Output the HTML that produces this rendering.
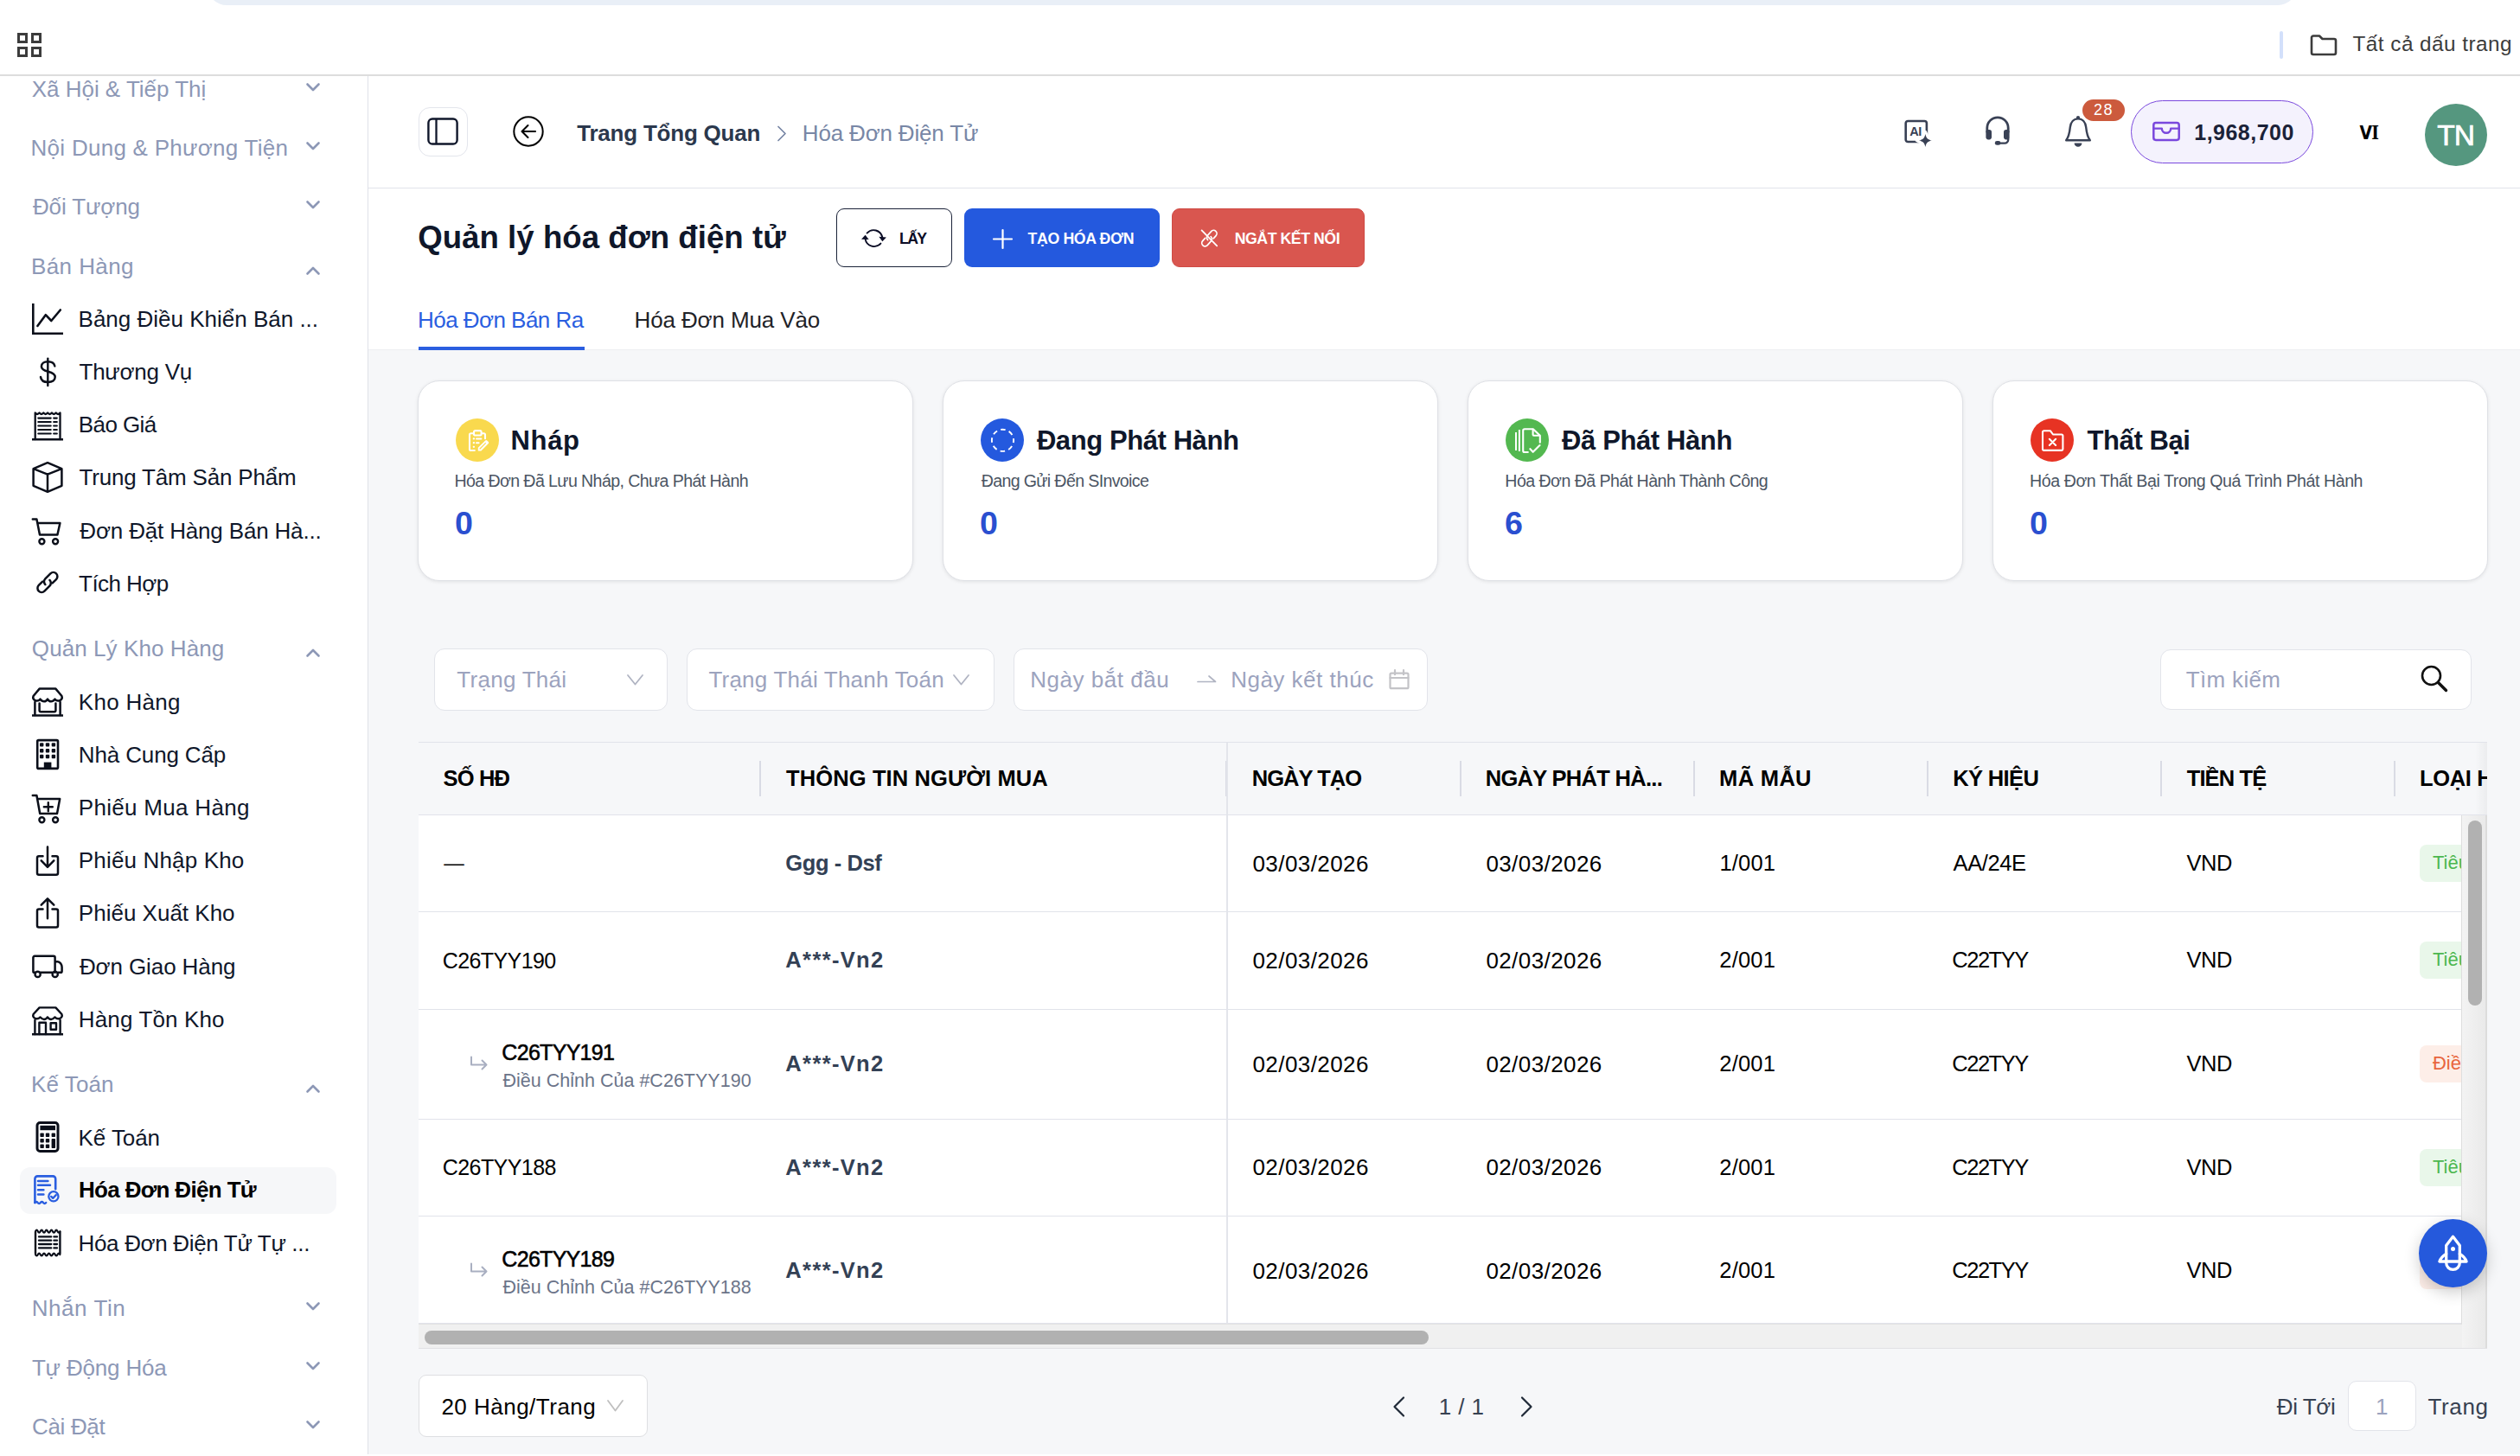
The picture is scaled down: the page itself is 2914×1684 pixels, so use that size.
<!DOCTYPE html>
<html lang="vi"><head><meta charset="utf-8"><title>Quản lý hóa đơn điện tử</title>
<style>
html,body{margin:0;padding:0;background:#fff;}
body{width:2914px;height:1684px;overflow:hidden;position:relative;font-family:"Liberation Sans",sans-serif;}
.t{position:absolute;white-space:nowrap;line-height:1;}
.b{position:absolute;}
svg{overflow:visible;}
</style></head><body>
<div class="b" style="left:0px;top:0px;width:2914px;height:86px;background:#fff"></div>
<div class="b" style="left:240px;top:-40px;width:2416px;height:45.6px;background:#e9eff7;border-radius:22px"></div>
<div class="b" style="left:0px;top:86px;width:2914px;height:2px;background:#dddddd"></div>
<svg class="b" style="left:20px;top:38px;" width="28" height="28" viewBox="0 0 28 28" fill="none"><path d="M1.5 1.5h9v9h-9zM17.5 1.5h9v9h-9zM1.5 17.5h9v9h-9zM17.5 17.5h9v9h-9z" stroke="#3c3c3c" stroke-width="3"/></svg>
<div class="b" style="left:2636px;top:36.4px;width:4px;height:31.2px;background:#d3e0fb;border-radius:2px"></div>
<svg class="b" style="left:2671px;top:39px;" width="32" height="26" viewBox="0 0 32 26" fill="none"><path d="M2 4.5a2 2 0 0 1 2-2h7l3.5 3.5H28a2 2 0 0 1 2 2V22a2 2 0 0 1-2 2H4a2 2 0 0 1-2-2z" stroke="#3c3c3c" stroke-width="2.6" stroke-linejoin="round"/></svg>
<div class="t" style="left:2720.55px;top:39.33px;font-size:24.3px;color:#3c3c3c;font-weight:400;letter-spacing:0.47px;">Tất cả dấu trang</div>
<div class="b" style="left:0px;top:88px;width:425px;height:1596px;background:#fff"></div>
<div class="b" style="left:424.8px;top:88px;width:1.4px;height:1596px;background:#dfe1e8"></div>
<div class="t" style="left:36.72px;top:89.99px;font-size:26px;color:#8d98b6;font-weight:400;letter-spacing:-0.02px;">Xã Hội &amp; Tiếp Thị</div>
<svg class="b" style="left:354px;top:96px;" width="16" height="10" viewBox="0 0 16 10" fill="none"><path d="M1.5 1.5L8 8l6.5-6.5" stroke="#8d98b6" stroke-width="2.6" stroke-linecap="round" stroke-linejoin="round"/></svg>
<div class="t" style="left:35.57px;top:157.79px;font-size:26px;color:#8d98b6;font-weight:400;letter-spacing:0.271px;">Nội Dung &amp; Phương Tiện</div>
<svg class="b" style="left:354px;top:163.8px;" width="16" height="10" viewBox="0 0 16 10" fill="none"><path d="M1.5 1.5L8 8l6.5-6.5" stroke="#8d98b6" stroke-width="2.6" stroke-linecap="round" stroke-linejoin="round"/></svg>
<div class="t" style="left:37.92px;top:225.79px;font-size:26px;color:#8d98b6;font-weight:400;letter-spacing:-0.122px;">Đối Tượng</div>
<svg class="b" style="left:354px;top:231.8px;" width="16" height="10" viewBox="0 0 16 10" fill="none"><path d="M1.5 1.5L8 8l6.5-6.5" stroke="#8d98b6" stroke-width="2.6" stroke-linecap="round" stroke-linejoin="round"/></svg>
<div class="t" style="left:35.97px;top:294.69px;font-size:26px;color:#8d98b6;font-weight:400;letter-spacing:0.423px;">Bán Hàng</div>
<svg class="b" style="left:354px;top:307.7px;" width="16" height="10" viewBox="0 0 16 10" fill="none"><path d="M1.5 8.5L8 2l6.5 6.5" stroke="#8d98b6" stroke-width="2.6" stroke-linecap="round" stroke-linejoin="round"/></svg>
<div class="t" style="left:36.87px;top:736.79px;font-size:26px;color:#8d98b6;font-weight:400;letter-spacing:0.077px;">Quản Lý Kho Hàng</div>
<svg class="b" style="left:354px;top:749.8px;" width="16" height="10" viewBox="0 0 16 10" fill="none"><path d="M1.5 8.5L8 2l6.5 6.5" stroke="#8d98b6" stroke-width="2.6" stroke-linecap="round" stroke-linejoin="round"/></svg>
<div class="t" style="left:35.97px;top:1240.79px;font-size:26px;color:#8d98b6;font-weight:400;letter-spacing:0.097px;">Kế Toán</div>
<svg class="b" style="left:354px;top:1253.8px;" width="16" height="10" viewBox="0 0 16 10" fill="none"><path d="M1.5 8.5L8 2l6.5 6.5" stroke="#8d98b6" stroke-width="2.6" stroke-linecap="round" stroke-linejoin="round"/></svg>
<div class="t" style="left:36.77px;top:1500.19px;font-size:26px;color:#8d98b6;font-weight:400;letter-spacing:0.55px;">Nhắn Tin</div>
<svg class="b" style="left:354px;top:1506.2px;" width="16" height="10" viewBox="0 0 16 10" fill="none"><path d="M1.5 1.5L8 8l6.5-6.5" stroke="#8d98b6" stroke-width="2.6" stroke-linecap="round" stroke-linejoin="round"/></svg>
<div class="t" style="left:36.92px;top:1568.79px;font-size:26px;color:#8d98b6;font-weight:400;letter-spacing:-0.171px;">Tự Động Hóa</div>
<svg class="b" style="left:354px;top:1574.8px;" width="16" height="10" viewBox="0 0 16 10" fill="none"><path d="M1.5 1.5L8 8l6.5-6.5" stroke="#8d98b6" stroke-width="2.6" stroke-linecap="round" stroke-linejoin="round"/></svg>
<div class="t" style="left:37.08px;top:1636.99px;font-size:26px;color:#8d98b6;font-weight:400;letter-spacing:-0.348px;">Cài Đặt</div>
<svg class="b" style="left:354px;top:1643px;" width="16" height="10" viewBox="0 0 16 10" fill="none"><path d="M1.5 1.5L8 8l6.5-6.5" stroke="#8d98b6" stroke-width="2.6" stroke-linecap="round" stroke-linejoin="round"/></svg>
<div class="b" style="left:23px;top:1350px;width:366px;height:54px;background:#f6f7f9;border-radius:12px"></div>
<div class="t" style="left:90.57px;top:356.49px;font-size:26px;color:#0f172a;font-weight:400;letter-spacing:-0.001px;">Bảng Điều Khiển Bán ...</div>
<svg class="b" style="left:37px;top:351.0px;" width="36" height="36" viewBox="0 0 36 36" fill="none"><path d="M1.3 0v34.7H36" stroke="#0b0f1a" stroke-width="2.6" stroke-linecap="butt" stroke-linejoin="miter"/><path d="M6.4 26L15.8 13.2l6.5 6.8L32.8 7.5" stroke="#0b0f1a" stroke-width="2.6" stroke-linecap="round" stroke-linejoin="round" /></svg>
<div class="t" style="left:91.52px;top:417.19px;font-size:26px;color:#0f172a;font-weight:400;letter-spacing:-0.254px;">Thương Vụ</div>
<svg class="b" style="left:37px;top:411.7px;" width="36" height="36" viewBox="0 0 36 36" fill="none"><path d="M18.3 2.6v31.4" stroke="#0b0f1a" stroke-width="2.4" stroke-linecap="round" stroke-linejoin="round" /><path d="M26.3 11.4c-0.6-3.3-3.5-5.2-7.9-5.2-4.5 0-7.5 2.2-7.5 5.6 0 3.6 2.9 4.8 7.6 5.9 5 1.2 8.2 2.5 8.2 6.4 0 3.7-3.3 5.9-8.1 5.9-4.9 0-8.1-2.2-8.6-6" stroke="#0b0f1a" stroke-width="2.5" stroke-linecap="round" stroke-linejoin="round" /></svg>
<div class="t" style="left:90.87px;top:478.19px;font-size:26px;color:#0f172a;font-weight:400;letter-spacing:-0.603px;">Báo Giá</div>
<svg class="b" style="left:37px;top:472.7px;" width="36" height="36" viewBox="0 0 36 36" fill="none"><path d="M3.7 35V4.4q2.4 3.2 4.8 0q2.4 3.2 4.8 0q2.4 3.2 4.8 0q2.4 3.2 4.8 0q2.4 3.2 4.8 0q2.4 3.2 4.8 0V35" stroke="#0b0f1a" stroke-width="2.3" stroke-linecap="round" stroke-linejoin="round" /><path d="M0 35.2h36" stroke="#0b0f1a" stroke-width="2.4" stroke-linecap="butt" stroke-linejoin="miter"/><path d="M7.3 10.6h14.4M25.2 10.6h3.6" stroke="#0b0f1a" stroke-width="2.2" stroke-linecap="round" stroke-linejoin="round" /><path d="M7.3 15h14.4M25.2 15h3.6" stroke="#0b0f1a" stroke-width="2.2" stroke-linecap="round" stroke-linejoin="round" /><path d="M7.3 19.5h14.4M25.2 19.5h3.6" stroke="#0b0f1a" stroke-width="2.2" stroke-linecap="round" stroke-linejoin="round" /><path d="M7.3 24h14.4M25.2 24h3.6" stroke="#0b0f1a" stroke-width="2.2" stroke-linecap="round" stroke-linejoin="round" /><path d="M7.3 28.5h14.4M25.2 28.5h3.6" stroke="#0b0f1a" stroke-width="2.2" stroke-linecap="round" stroke-linejoin="round" /></svg>
<div class="t" style="left:91.52px;top:539.19px;font-size:26px;color:#0f172a;font-weight:400;letter-spacing:-0.185px;">Trung Tâm Sản Phẩm</div>
<svg class="b" style="left:37px;top:533.7px;" width="36" height="36" viewBox="0 0 36 36" fill="none"><path d="M18 1.2L1.6 8.2v19.6L18 34.8l16.4-7V8.2zM1.6 8.2L18 14.6l16.4-6.4M18 14.6v20.2" stroke="#0b0f1a" stroke-width="2.5" stroke-linecap="round" stroke-linejoin="round" /></svg>
<div class="t" style="left:92.32px;top:600.69px;font-size:26px;color:#0f172a;font-weight:400;letter-spacing:-0.168px;">Đơn Đặt Hàng Bán Hà...</div>
<svg class="b" style="left:37px;top:595.2px;" width="36" height="36" viewBox="0 0 36 36" fill="none"><path d="M0.8 5.6h4.6l3.6 18h20.4l3-13.6H6.4" stroke="#0b0f1a" stroke-width="2.5" stroke-linecap="round" stroke-linejoin="round" /><circle cx="11.4" cy="31.3" r="3" stroke="#0b0f1a" stroke-width="2.4"/><circle cx="27.1" cy="31.3" r="3" stroke="#0b0f1a" stroke-width="2.4"/></svg>
<div class="t" style="left:91.12px;top:661.69px;font-size:26px;color:#0f172a;font-weight:400;letter-spacing:-0.572px;">Tích Hợp</div>
<svg class="b" style="left:37px;top:656.2px;" width="36" height="36" viewBox="0 0 36 36" fill="none"><g transform="translate(17.9 17.5) rotate(-45)"><path d="M-3.6 0A4.7 4.7 0 0 1 1.1-4.7H9.6A4.7 4.7 0 0 1 9.6 4.7H3.4" stroke="#0b0f1a" stroke-width="2.5" stroke-linecap="round" stroke-linejoin="round" /><path d="M3.6 0A4.7 4.7 0 0 1-1.1 4.7H-9.6A4.7 4.7 0 0 1-9.6-4.7H-3.4" stroke="#0b0f1a" stroke-width="2.5" stroke-linecap="round" stroke-linejoin="round" /></g></svg>
<div class="t" style="left:90.87px;top:798.59px;font-size:26px;color:#0f172a;font-weight:400;letter-spacing:0.28px;">Kho Hàng</div>
<svg class="b" style="left:37px;top:793.1px;" width="36" height="36" viewBox="0 0 36 36" fill="none"><path d="M8.6 3.6h18.8l7 8.4c1.6 4.6-4.4 7.6-8 3.6-2.4 3.6-6.4 3.6-8.4 0-2 3.6-6 3.6-8.4 0-3.6 4-9.6 1-8-3.6z" stroke="#0b0f1a" stroke-width="2.5" stroke-linecap="round" stroke-linejoin="round" /><path d="M3.4 19v15M32.6 19v15M8.6 20.5v8.6a1.2 1.2 0 0 0 1.2 1.2h16.4a1.2 1.2 0 0 0 1.2-1.2v-8.6" stroke="#0b0f1a" stroke-width="2.5" stroke-linecap="round" stroke-linejoin="round" /><path d="M0 34.6h36" stroke="#0b0f1a" stroke-width="2.5" stroke-linecap="butt" stroke-linejoin="miter"/></svg>
<div class="t" style="left:90.87px;top:859.79px;font-size:26px;color:#0f172a;font-weight:400;letter-spacing:-0.143px;">Nhà Cung Cấp</div>
<svg class="b" style="left:37px;top:854.3px;" width="36" height="36" viewBox="0 0 36 36" fill="none"><rect x="6.2" y="2.1" width="23.8" height="32.8" rx="1.5" stroke="#0b0f1a" stroke-width="2.6"/><rect x="9.0" y="5.2" width="4.4" height="4.4" rx="1" fill="#0b0f1a"/><rect x="9.0" y="12.0" width="4.4" height="4.4" rx="1" fill="#0b0f1a"/><rect x="9.0" y="18.8" width="4.4" height="4.4" rx="1" fill="#0b0f1a"/><rect x="15.8" y="5.2" width="4.4" height="4.4" rx="1" fill="#0b0f1a"/><rect x="15.8" y="12.0" width="4.4" height="4.4" rx="1" fill="#0b0f1a"/><rect x="15.8" y="18.8" width="4.4" height="4.4" rx="1" fill="#0b0f1a"/><rect x="22.7" y="5.2" width="4.4" height="4.4" rx="1" fill="#0b0f1a"/><rect x="22.7" y="12.0" width="4.4" height="4.4" rx="1" fill="#0b0f1a"/><rect x="22.7" y="18.8" width="4.4" height="4.4" rx="1" fill="#0b0f1a"/><rect x="13.8" y="27.6" width="8.6" height="8" fill="#0b0f1a"/></svg>
<div class="t" style="left:90.87px;top:920.99px;font-size:26px;color:#0f172a;font-weight:400;letter-spacing:0.294px;">Phiếu Mua Hàng</div>
<svg class="b" style="left:37px;top:915.5px;" width="36" height="36" viewBox="0 0 36 36" fill="none"><path d="M0.8 4h4.6l3.8 21h19.8l3.2-17H6.2" stroke="#0b0f1a" stroke-width="2.5" stroke-linecap="round" stroke-linejoin="round" /><circle cx="11.4" cy="32.2" r="3" stroke="#0b0f1a" stroke-width="2.4"/><circle cx="27.1" cy="32.2" r="3" stroke="#0b0f1a" stroke-width="2.4"/><path d="M18.8 12.2v10M13.8 17.2h10" stroke="#0b0f1a" stroke-width="2.4" stroke-linecap="round" stroke-linejoin="round" /></svg>
<div class="t" style="left:90.87px;top:982.19px;font-size:26px;color:#0f172a;font-weight:400;letter-spacing:0.158px;">Phiếu Nhập Kho</div>
<svg class="b" style="left:37px;top:976.7px;" width="36" height="36" viewBox="0 0 36 36" fill="none"><path d="M12.5 13.2H8a2 2 0 0 0-2 2v17.6a2 2 0 0 0 2 2h20a2 2 0 0 0 2-2V15.200000000000001a2 2 0 0 0-2-2h-4.5" stroke="#0b0f1a" stroke-width="2.5" stroke-linecap="round" stroke-linejoin="round" /><path d="M18 2.6v22.8M10.7 18.4L18 25.8l7.3-7.4" stroke="#0b0f1a" stroke-width="2.5" stroke-linecap="round" stroke-linejoin="round" /></svg>
<div class="t" style="left:90.87px;top:1043.39px;font-size:26px;color:#0f172a;font-weight:400;letter-spacing:0.002px;">Phiếu Xuất Kho</div>
<svg class="b" style="left:37px;top:1037.9px;" width="36" height="36" viewBox="0 0 36 36" fill="none"><path d="M12.5 13.4H8a2 2 0 0 0-2 2v17a2 2 0 0 0 2 2h20a2 2 0 0 0 2-2v-17a2 2 0 0 0-2-2h-4.5" stroke="#0b0f1a" stroke-width="2.5" stroke-linecap="round" stroke-linejoin="round" /><path d="M18 24.2V1.6M10.7 8.6L18 1.4l7.3 7.2" stroke="#0b0f1a" stroke-width="2.5" stroke-linecap="round" stroke-linejoin="round" /></svg>
<div class="t" style="left:91.92px;top:1104.99px;font-size:26px;color:#0f172a;font-weight:400;letter-spacing:-0.105px;">Đơn Giao Hàng</div>
<svg class="b" style="left:37px;top:1099.5px;" width="36" height="36" viewBox="0 0 36 36" fill="none"><path d="M3.4 24.8H2.8a1.4 1.4 0 0 1-1.4-1.4V7.4A1.6 1.6 0 0 1 3 5.800000000000001h22a1.6 1.6 0 0 1 1.6 1.6v17.4M10 24.8h13M26.6 12.2h3.2c2.4 0 4.8 3.4 4.8 6.4v4.6a1.6 1.6 0 0 1-1.6 1.6h-2.6" stroke="#0b0f1a" stroke-width="2.5" stroke-linecap="round" stroke-linejoin="round" /><circle cx="6.6" cy="26.9" r="3.1" stroke="#0b0f1a" stroke-width="2.4"/><circle cx="26.7" cy="26.9" r="3.1" stroke="#0b0f1a" stroke-width="2.4"/></svg>
<div class="t" style="left:90.87px;top:1165.99px;font-size:26px;color:#0f172a;font-weight:400;letter-spacing:0.138px;">Hàng Tồn Kho</div>
<svg class="b" style="left:37px;top:1160.5px;" width="36" height="36" viewBox="0 0 36 36" fill="none"><path d="M8.6 4.4h18.8l7 7.6c1.6 4.6-4.4 7.2-8 3.4-2.4 3.4-6.4 3.4-8.4 0-2 3.4-6 3.4-8.4 0-3.6 3.8-9.6 1.2-8-3.4z" stroke="#0b0f1a" stroke-width="2.4" stroke-linecap="round" stroke-linejoin="round" /><path d="M3.4 19v16M32.6 19v16M8.4 35V21.8h7.6V35M21.6 22.2h6.4v7.6h-6.4z" stroke="#0b0f1a" stroke-width="2.4" stroke-linecap="round" stroke-linejoin="round" /><path d="M0 35.2h36" stroke="#0b0f1a" stroke-width="2.4" stroke-linecap="butt" stroke-linejoin="miter"/></svg>
<div class="t" style="left:90.57px;top:1302.69px;font-size:26px;color:#0f172a;font-weight:400;letter-spacing:-0.07px;">Kế Toán</div>
<svg class="b" style="left:37px;top:1297.2px;" width="36" height="36" viewBox="0 0 36 36" fill="none"><rect x="6" y="1.5" width="24" height="33" rx="3.2" stroke="#0b0f1a" stroke-width="3"/><rect x="9.4" y="4.8" width="17.6" height="5.4" fill="#0b0f1a"/><rect x="9.399999999999999" y="13.600000000000001" width="4.4" height="4.4" rx="0.8" fill="#0b0f1a"/><rect x="9.399999999999999" y="20.1" width="4.4" height="4.4" rx="0.8" fill="#0b0f1a"/><rect x="9.399999999999999" y="26.6" width="4.4" height="4.4" rx="0.8" fill="#0b0f1a"/><rect x="15.8" y="13.600000000000001" width="4.4" height="4.4" rx="0.8" fill="#0b0f1a"/><rect x="15.8" y="20.1" width="4.4" height="4.4" rx="0.8" fill="#0b0f1a"/><rect x="15.8" y="26.6" width="4.4" height="4.4" rx="0.8" fill="#0b0f1a"/><rect x="22.6" y="13.6" width="4.4" height="4.4" rx="0.8" fill="#0b0f1a"/><rect x="22.6" y="20.1" width="4.4" height="10.9" rx="0.8" fill="#0b0f1a"/></svg>
<div class="t" style="left:90.96px;top:1363.49px;font-size:26px;color:#000;font-weight:700;letter-spacing:-0.661px;">Hóa Đơn Điện Tử</div>
<svg class="b" style="left:37px;top:1358.0px;" width="36" height="36" viewBox="0 0 36 36" fill="none"><path d="M3.4 33V5.4a3 3 0 0 1 3-3h17.8a3 3 0 0 1 3 3v11.8" stroke="#2a5ee0" stroke-width="2.6" stroke-linecap="round" stroke-linejoin="round" /><path d="M3.4 33q1.6-2 3.2 0t3.2 0t3.2 0t3.2 0" stroke="#2a5ee0" stroke-width="2.4" stroke-linecap="round" stroke-linejoin="round" /><path d="M7 8h11.4M7 12.8h14M7 18.2h6.4M7 23.4h6.4" stroke="#2a5ee0" stroke-width="2.5" stroke-linecap="round" stroke-linejoin="round" /><circle cx="24.9" cy="25.8" r="5.6" stroke="#2a5ee0" stroke-width="2.3"/><path d="M22.2 25.9l2 2 3.6-3.8" stroke="#2a5ee0" stroke-width="2.3" stroke-linecap="round" stroke-linejoin="round" /></svg>
<div class="t" style="left:90.57px;top:1424.69px;font-size:26px;color:#0f172a;font-weight:400;letter-spacing:-0.337px;">Hóa Đơn Điện Tử Tự ...</div>
<svg class="b" style="left:37px;top:1419.2px;" width="36" height="36" viewBox="0 0 36 36" fill="none"><path d="M4 6v24.6" stroke="#0b0f1a" stroke-width="2.4" stroke-linecap="round" stroke-linejoin="round" /><path d="M32.4 6v24.6" stroke="#0b0f1a" stroke-width="2.4" stroke-linecap="round" stroke-linejoin="round" /><path d="M4 5.2q1.42-3 2.84 0t2.84 0t2.84 0t2.84 0t2.84 0t2.84 0t2.84 0t2.84 0t2.84 0t2.84 0" stroke="#0b0f1a" stroke-width="2.2" stroke-linecap="round" stroke-linejoin="round" /><path d="M4 32q1.42 3 2.84 0t2.84 0t2.84 0t2.84 0t2.84 0t2.84 0t2.84 0t2.84 0t2.84 0t2.84 0" stroke="#0b0f1a" stroke-width="2.2" stroke-linecap="round" stroke-linejoin="round" /><path d="M8 11.4h14.2M25.4 11.4h3.6" stroke="#0b0f1a" stroke-width="2.3" stroke-linecap="round" stroke-linejoin="round" /><path d="M8 15.7h14.2M25.4 15.7h3.6" stroke="#0b0f1a" stroke-width="2.3" stroke-linecap="round" stroke-linejoin="round" /><path d="M8 20h14.2M25.4 20h3.6" stroke="#0b0f1a" stroke-width="2.3" stroke-linecap="round" stroke-linejoin="round" /><path d="M8 24.4h14.2M25.4 24.4h3.6" stroke="#0b0f1a" stroke-width="2.3" stroke-linecap="round" stroke-linejoin="round" /></svg>
<div class="b" style="left:426.2px;top:88px;width:2488px;height:129px;background:#fff"></div>
<div class="b" style="left:426.2px;top:216.6px;width:2488px;height:1.5px;background:#e1e3ea"></div>
<div class="b" style="left:484px;top:124px;width:57px;height:57px;border:1.5px solid #e3e5ec;border-radius:13px;box-sizing:border-box;background:#fff"></div>
<svg class="b" style="left:494px;top:136px;" width="37" height="32" viewBox="0 0 37 32" fill="none"><rect x="1.4" y="1.5" width="33.2" height="29" rx="4.6" stroke="#10172b" stroke-width="2.4"/><path d="M10.5 2v28" stroke="#10172b" stroke-width="2.3"/></svg>
<svg class="b" style="left:593px;top:134px;" width="36" height="36" viewBox="0 0 36 36" fill="none"><circle cx="18" cy="18" r="16.7" stroke="#000" stroke-width="2"/><path d="M26 18H11M17.5 11L10.5 18l7 7" stroke="#000" stroke-width="2.1" stroke-linecap="round" stroke-linejoin="round"/></svg>
<div class="t" style="left:667.21px;top:140.79px;font-size:26px;color:#2b384d;font-weight:700;letter-spacing:-0.215px;">Trang Tổng Quan</div>
<svg class="b" style="left:898px;top:145px;" width="12" height="19" viewBox="0 0 12 19" fill="none"><path d="M2 1.5l8 8-8 8" stroke="#7584a3" stroke-width="1.7" stroke-linecap="round" stroke-linejoin="round"/></svg>
<div class="t" style="left:927.87px;top:140.79px;font-size:26px;color:#7887a6;font-weight:400;letter-spacing:-0.18px;">Hóa Đơn Điện Tử</div>
<svg class="b" style="left:2202px;top:137px;" width="34" height="34" viewBox="0 0 34 34" fill="none"><rect x="1.7" y="3" width="24.2" height="24" rx="2.6" stroke="#394155" stroke-width="2.6"/><path d="M24.4 15.5 L27.6 22.2 L34.4 25.4 L27.6 28.6 L24.4 35.4 L21.2 28.6 L14.4 25.4 L21.2 22.2Z" fill="#fff" stroke="#fff" stroke-width="3.4" stroke-linejoin="round"/><path d="M24.4 17.9 C25.2 22.4 27.4 24.6 31.9 25.4 C27.4 26.2 25.2 28.4 24.4 32.9 C23.6 28.4 21.4 26.2 16.9 25.4 C21.4 24.6 23.6 22.4 24.4 17.9Z" fill="#394155"/><text x="6.2" y="19.8" font-family="Liberation Sans, sans-serif" font-weight="700" font-size="14.5" fill="#394155" letter-spacing="-0.4">AI</text></svg>
<svg class="b" style="left:2294px;top:133px;" width="32" height="36" viewBox="0 0 32 36" fill="none"><path d="M3.8 19.5V15a12.2 12.2 0 0 1 24.4 0v4.5" stroke="#394155" stroke-width="2.8" stroke-linecap="round" stroke-linejoin="round" /><rect x="2.4" y="17" width="6.6" height="11.4" rx="2.8" fill="#394155"/><rect x="23" y="17" width="6.6" height="11.4" rx="2.8" fill="#394155"/><path d="M28.2 27v1.6a4 4 0 0 1-4 4H18" stroke="#394155" stroke-width="2.4" stroke-linecap="round" stroke-linejoin="round" /><rect x="12.8" y="30" width="6.6" height="4.8" rx="2.4" fill="#394155"/></svg>
<svg class="b" style="left:2386px;top:133px;" width="34" height="38" viewBox="0 0 34 38" fill="none"><circle cx="17" cy="3" r="2.1" fill="#394155"/><path d="M3.2 29.2c3.6-4.6 4-9 4.6-15 0.6-5.8 4.2-9.8 9.2-9.8s8.600000000000001 4 9.2 9.8c0.6 6 1 10.4 4.6 15z" stroke="#394155" stroke-width="2.4" stroke-linecap="round" stroke-linejoin="round" /><path d="M12.6 32.4h8.8a4.4 4.4 0 0 1-8.8 0z" fill="#394155"/></svg>
<div class="b" style="left:2408px;top:114.5px;width:49px;height:25px;background:#cc5a3d;border-radius:13px"></div>
<div class="t" style="left:2421.09px;top:117.66px;font-size:18px;color:#fff;font-weight:400;letter-spacing:1.365px;">28</div>
<div class="b" style="left:2464px;top:115.5px;width:211px;height:73px;background:#f4f2fd;border:1.6px solid #7a48dd;border-radius:37px;box-sizing:border-box"></div>
<svg class="b" style="left:2488px;top:140px;" width="34" height="24" viewBox="0 0 34 24" fill="none"><rect x="2.3" y="2.1" width="29.4" height="19.8" rx="2.6" stroke="#7a48dd" stroke-width="2.5"/><path d="M2.3 8.6H11.8a5.2 5.2 0 0 0 10.4 0H31.7" stroke="#7a48dd" stroke-width="2.4" stroke-linecap="round" stroke-linejoin="round" /></svg>
<div class="t" style="left:2537.33px;top:140.64px;font-size:25px;color:#1b2238;font-weight:700;letter-spacing:0.472px;">1,968,700</div>
<div class="t" style="left:2728.4px;top:145.59px;font-size:18.8px;color:#000;font-weight:700;font-family:'DejaVu Sans',sans-serif;transform:scaleY(1.17);transform-origin:0 84.65%;">V<span style="font-family:'DejaVu Serif',serif;font-size:18.6px;margin-left:-0.6px">I</span></div>
<div class="b" style="left:2804px;top:120px;width:72px;height:72px;background:#55977f;border-radius:50%"></div>
<div class="t" style="left:2818.15px;top:139.56px;font-size:33.6px;color:#fff;font-weight:400;letter-spacing:-0.996px;-webkit-text-stroke:0.7px #fff;">TN</div>
<div class="b" style="left:426.2px;top:218.1px;width:2488px;height:187px;background:#fff"></div>
<div class="t" style="left:483.2px;top:257.02px;font-size:36.6px;color:#0f172a;font-weight:700;letter-spacing:0.048px;">Quản lý hóa đơn điện tử</div>
<div class="b" style="left:967px;top:241px;width:134px;height:68px;border:1.8px solid #1a2238;border-radius:9px;box-sizing:border-box;background:#fff"></div>
<svg class="b" style="left:996px;top:263px;" width="30" height="25" viewBox="0 0 30 25" fill="none"><path d="M6.6 6.6A10.3 10.3 0 0 1 24.3 11.2" stroke="#0b0d26" stroke-width="1.9" stroke-linecap="round" stroke-linejoin="round" /><path d="M20.3 10.8L28.9 11.4L24.4 16.2Z" fill="#0b0d26"/><path d="M22.4 18.6A10.3 10.3 0 0 1 4.6 13.6" stroke="#0b0d26" stroke-width="1.9" stroke-linecap="round" stroke-linejoin="round" /><path d="M0 13.8L4.6 8.8L8.6 14Z" fill="#0b0d26"/></svg>
<div class="t" style="left:1040.12px;top:267.62px;font-size:17.7px;color:#0b0d26;font-weight:700;letter-spacing:-1.766px;">LẤY</div>
<div class="b" style="left:1115px;top:241px;width:225.5px;height:68px;background:#2459de;border-radius:9px"></div>
<svg class="b" style="left:1148px;top:264.5px;" width="23" height="23" viewBox="0 0 23 23" fill="none"><path d="M11.5 1v21M1 11.5h21" stroke="#fff" stroke-width="2.2" stroke-linecap="round"/></svg>
<div class="t" style="left:1188.6px;top:267.62px;font-size:17.7px;color:#fff;font-weight:700;letter-spacing:-0.355px;">TẠO HÓA ĐƠN</div>
<div class="b" style="left:1355px;top:241px;width:223px;height:68px;background:#d9564f;border:1.5px solid #cf4a44;box-sizing:border-box;border-radius:9px"></div>
<svg class="b" style="left:1388px;top:264px;" width="22" height="23" viewBox="0 0 22 23" fill="none"><g transform="translate(10.4 11.6) rotate(-48)"><path d="M-2.6 0A3.7 3.7 0 0 1 1.1-3.7H7.4A3.7 3.7 0 0 1 7.4 3.7H3" stroke="#fff" stroke-width="1.7" stroke-linecap="round" stroke-linejoin="round" /><path d="M2.6 0A3.7 3.7 0 0 1-1.1 3.7H-7.4A3.7 3.7 0 0 1-7.4-3.7H-3" stroke="#fff" stroke-width="1.7" stroke-linecap="round" stroke-linejoin="round" /></g><path d="M1.6 2.4l17.6 18" stroke="#fff" stroke-width="1.8" stroke-linecap="round" stroke-linejoin="round" /></svg>
<div class="t" style="left:1427.72px;top:267.62px;font-size:17.7px;color:#fff;font-weight:700;letter-spacing:-0.444px;">NGẮT KẾT NỐI</div>
<div class="t" style="left:482.97px;top:356.89px;font-size:26px;color:#2a5ee0;font-weight:400;letter-spacing:-0.54px;">Hóa Đơn Bán Ra</div>
<div class="t" style="left:733.47px;top:356.89px;font-size:26px;color:#1f2328;font-weight:400;letter-spacing:-0.12px;">Hóa Đơn Mua Vào</div>
<div class="b" style="left:426.2px;top:404px;width:2488px;height:1.1px;background:#eeeff1"></div>
<div class="b" style="left:484px;top:401px;width:192.4px;height:4px;background:#2a5ee0"></div>
<div class="b" style="left:426.2px;top:405.1px;width:2487.8px;height:1278.9px;background:#f6f7f9"></div>
<div class="b" style="left:483.1px;top:439.9px;width:572.8px;height:232.3px;background:#fff;border:1.2px solid #dfe1e6;border-radius:25px;box-sizing:border-box;box-shadow:0 1px 4px rgba(0,0,0,0.09)"></div>
<div class="b" style="left:527px;top:484px;width:50.4px;height:50.4px;background:#f9d94e;border-radius:50%"></div>
<svg class="b" style="left:538px;top:495px;" width="28" height="28" viewBox="0 0 28 28" fill="none"><path d="M9.4 6.2H6.6a1.6 1.6 0 0 0-1.6 1.6v16.6a1.6 1.6 0 0 0 1.6 1.6h4.2M18.8 6.2h2.6a1.6 1.6 0 0 1 1.6 1.6v4.4" stroke="#fff" stroke-width="2.1" stroke-linecap="round" stroke-linejoin="round" /><rect x="10" y="3.1" width="8.6" height="5.4" rx="1.6" stroke="#fff" stroke-width="2.1"/><path d="M9.8 12.4h0.2M9.8 17.2h0.2M9.8 21.8h0.2" stroke="#fff" stroke-width="2.2" stroke-linecap="round" stroke-linejoin="round" /><path d="M13 12.4h5.4M13 17.2h2.6" stroke="#fff" stroke-width="2" stroke-linecap="round" stroke-linejoin="round" /><path d="M14.8 26.4v-3.6l8.4-8.4a1.4 1.4 0 0 1 2 0l1.6 1.600000000000001a1.4 1.4 0 0 1 0 2l-8.4 8.4z" fill="#fff"/><path d="M17 24l6.4-6.4" stroke="#f9d94e" stroke-width="1.2" stroke-linecap="round"/></svg>
<div class="t" style="left:590.43px;top:493.76px;font-size:31px;color:#0f172a;font-weight:700;letter-spacing:0.698px;">Nháp</div>
<div class="t" style="left:525.39px;top:547.21px;font-size:19.6px;color:#4b5563;font-weight:400;letter-spacing:-0.593px;">Hóa Đơn Đã Lưu Nháp, Chưa Phát Hành</div>
<div class="t" style="left:526.01px;top:587.17px;font-size:37.6px;color:#2a4fd0;font-weight:700;letter-spacing:1.017px;">0</div>
<div class="b" style="left:1090.1px;top:439.9px;width:572.8px;height:232.3px;background:#fff;border:1.2px solid #dfe1e6;border-radius:25px;box-sizing:border-box;box-shadow:0 1px 4px rgba(0,0,0,0.09)"></div>
<div class="b" style="left:1134px;top:484px;width:50.4px;height:50.4px;background:#2459de;border-radius:50%"></div>
<svg class="b" style="left:1145px;top:495px;" width="28" height="28" viewBox="0 0 28 28" fill="none"><circle cx="14.5" cy="14.3" r="12.6" stroke="#fff" stroke-width="1.9" stroke-dasharray="5.6 4.3" stroke-dashoffset="2.8" fill="none"/></svg>
<div class="t" style="left:1198.88px;top:493.76px;font-size:31px;color:#0f172a;font-weight:700;letter-spacing:-0.413px;">Đang Phát Hành</div>
<div class="t" style="left:1134.67px;top:547.21px;font-size:19.6px;color:#4b5563;font-weight:400;letter-spacing:-0.637px;">Đang Gửi Đến SInvoice</div>
<div class="t" style="left:1133.01px;top:587.17px;font-size:37.6px;color:#2a4fd0;font-weight:700;letter-spacing:1.017px;">0</div>
<div class="b" style="left:1697.1px;top:439.9px;width:572.8px;height:232.3px;background:#fff;border:1.2px solid #dfe1e6;border-radius:25px;box-sizing:border-box;box-shadow:0 1px 4px rgba(0,0,0,0.09)"></div>
<div class="b" style="left:1741px;top:484px;width:50.4px;height:50.4px;background:#53b850;border-radius:50%"></div>
<svg class="b" style="left:1752px;top:495px;" width="28" height="28" viewBox="0 0 28 28" fill="none"><path d="M1 5v21" stroke="#fff" stroke-width="2" stroke-linecap="butt" stroke-linejoin="miter"/><path d="M4.9 2v25" stroke="#fff" stroke-width="2" stroke-linecap="butt" stroke-linejoin="miter"/><path d="M14.8 28H11a1.8 1.8 0 0 1-1.8-1.8V3a1.8 1.8 0 0 1 1.8-1.8h9.8l8 7.6v8" stroke="#fff" stroke-width="2.1" stroke-linecap="round" stroke-linejoin="round" /><path d="M20.6 1.8v6a1 1 0 0 0 1 1h6.4" stroke="#fff" stroke-width="2.1" stroke-linecap="round" stroke-linejoin="round" /><path d="M17.4 24.2l3.300000000000001 3.6 7.8-7.8" stroke="#fff" stroke-width="2.1" stroke-linecap="round" stroke-linejoin="round" /></svg>
<div class="t" style="left:1806.08px;top:493.76px;font-size:31px;color:#0f172a;font-weight:700;letter-spacing:-0.39px;">Đã Phát Hành</div>
<div class="t" style="left:1740.29px;top:547.21px;font-size:19.6px;color:#4b5563;font-weight:400;letter-spacing:-0.543px;">Hóa Đơn Đã Phát Hành Thành Công</div>
<div class="t" style="left:1740.12px;top:587.17px;font-size:37.6px;color:#2a4fd0;font-weight:700;letter-spacing:0.723px;">6</div>
<div class="b" style="left:2304.1px;top:439.9px;width:572.8px;height:232.3px;background:#fff;border:1.2px solid #dfe1e6;border-radius:25px;box-sizing:border-box;box-shadow:0 1px 4px rgba(0,0,0,0.09)"></div>
<div class="b" style="left:2348px;top:484px;width:50.4px;height:50.4px;background:#e73323;border-radius:50%"></div>
<svg class="b" style="left:2359px;top:495px;" width="28" height="28" viewBox="0 0 28 28" fill="none"><path d="M3 4.7a1.4 1.4 0 0 1 1.4-1.4h7.6l3 4.2h10a1.4 1.4 0 0 1 1.4 1.4v15.6a1.4 1.4 0 0 1-1.4 1.4H4.4A1.4 1.4 0 0 1 3 24.5z" stroke="#fff" stroke-width="2.1" stroke-linecap="round" stroke-linejoin="round" /><path d="M10.900000000000001 12.8l7.2 7.2M18.1 12.8l-7.2 7.2" stroke="#fff" stroke-width="2.1" stroke-linecap="round" stroke-linejoin="round" /></svg>
<div class="t" style="left:2413.55px;top:493.76px;font-size:31px;color:#0f172a;font-weight:700;letter-spacing:-0.407px;">Thất Bại</div>
<div class="t" style="left:2347.09px;top:547.21px;font-size:19.6px;color:#4b5563;font-weight:400;letter-spacing:-0.441px;">Hóa Đơn Thất Bại Trong Quá Trình Phát Hành</div>
<div class="t" style="left:2347.01px;top:587.17px;font-size:37.6px;color:#2a4fd0;font-weight:700;letter-spacing:1.017px;">0</div>
<div class="b" style="left:502.3px;top:750.3px;width:269.6px;height:71.3px;background:#fff;border:1.4px solid #e2e4ea;border-radius:12px;box-sizing:border-box"></div><div class="t" style="left:528.32px;top:773.29px;font-size:26px;color:#9ca3be;font-weight:400;letter-spacing:0.272px;">Trạng Thái</div><svg class="b" style="left:725px;top:780px;" width="19" height="13" viewBox="0 0 19 13" fill="none"><path d="M1 1l8.5 10.5L18 1" stroke="#b0b4c2" stroke-width="1.8" stroke-linecap="round" stroke-linejoin="round"/></svg>
<div class="b" style="left:793.6px;top:750.3px;width:356.2px;height:71.3px;background:#fff;border:1.4px solid #e2e4ea;border-radius:12px;box-sizing:border-box"></div><div class="t" style="left:819.42px;top:773.29px;font-size:26px;color:#9ca3be;font-weight:400;letter-spacing:0.218px;">Trạng Thái Thanh Toán</div><svg class="b" style="left:1102px;top:780px;" width="19" height="13" viewBox="0 0 19 13" fill="none"><path d="M1 1l8.5 10.5L18 1" stroke="#b0b4c2" stroke-width="1.8" stroke-linecap="round" stroke-linejoin="round"/></svg>
<div class="b" style="left:1172px;top:750.3px;width:478.8px;height:71.3px;background:#fff;border:1.4px solid #e2e4ea;border-radius:12px;box-sizing:border-box"></div>
<div class="t" style="left:1191.17px;top:773.29px;font-size:26px;color:#9ca3be;font-weight:400;letter-spacing:0.535px;">Ngày bắt đầu</div>
<svg class="b" style="left:1384px;top:780px;" width="23" height="10" viewBox="0 0 23 10" fill="none"><path d="M1 8.5h20.5L14 2" stroke="#b0b4c2" stroke-width="1.7" stroke-linecap="round" stroke-linejoin="round"/></svg>
<div class="t" style="left:1423.17px;top:773.29px;font-size:26px;color:#9ca3be;font-weight:400;letter-spacing:0.504px;">Ngày kết thúc</div>
<svg class="b" style="left:1606px;top:774px;" width="24" height="24" viewBox="0 0 24 24" fill="none"><rect x="1.5" y="4.6" width="21" height="17.6" rx="1.5" stroke="#c3c3c7" stroke-width="2.2"/><path d="M1.5 10h21M7 1.2v5M17 1.2v5" stroke="#c3c3c7" stroke-width="2.2" stroke-linecap="round"/></svg>
<div class="b" style="left:2498.3px;top:751px;width:359.7px;height:70px;background:#fff;border:1.4px solid #e2e4ea;border-radius:12px;box-sizing:border-box"></div>
<div class="t" style="left:2527.72px;top:773.29px;font-size:26px;color:#9ca3be;font-weight:400;letter-spacing:0.345px;">Tìm kiếm</div>
<svg class="b" style="left:2799px;top:769px;" width="32" height="32" viewBox="0 0 32 32" fill="none"><circle cx="12.5" cy="12.5" r="10.5" stroke="#111" stroke-width="2.6"/><path d="M20.5 20.5l9 9" stroke="#111" stroke-width="3.4" stroke-linecap="round"/></svg>
<div class="b" style="left:484px;top:857.6px;width:2392px;height:1.6px;background:#e1e3ea"></div>
<div class="b" style="left:484px;top:941.7px;width:2392px;height:1.6px;background:#e1e3ea"></div>
<div class="b" style="left:484px;top:943.3px;width:2362.5px;height:588px;background:#fff"></div>
<div class="b" style="left:484px;top:1053.6px;width:2362.5px;height:1.4px;background:#e1e3ea"></div>
<div class="b" style="left:484px;top:1166.5px;width:2362.5px;height:1.4px;background:#e1e3ea"></div>
<div class="b" style="left:484px;top:1293.8px;width:2362.5px;height:1.4px;background:#e1e3ea"></div>
<div class="b" style="left:484px;top:1405.8px;width:2362.5px;height:1.4px;background:#e1e3ea"></div>
<div class="b" style="left:484px;top:1530.3px;width:2362.5px;height:1.4px;background:#e1e3ea"></div>
<div class="b" style="left:1418.3px;top:859px;width:1.4px;height:672px;background:#e3e5eb"></div>
<div class="b" style="left:878.4px;top:879.5px;width:1.8px;height:41.5px;background:#d9dbe4"></div>
<div class="b" style="left:1416.6px;top:879.5px;width:1.8px;height:41.5px;background:#d9dbe4"></div>
<div class="b" style="left:1688.4px;top:879.5px;width:1.8px;height:41.5px;background:#d9dbe4"></div>
<div class="b" style="left:1958.2px;top:879.5px;width:1.8px;height:41.5px;background:#d9dbe4"></div>
<div class="b" style="left:2228.3px;top:879.5px;width:1.8px;height:41.5px;background:#d9dbe4"></div>
<div class="b" style="left:2498.2px;top:879.5px;width:1.8px;height:41.5px;background:#d9dbe4"></div>
<div class="b" style="left:2768.1px;top:879.5px;width:1.8px;height:41.5px;background:#d9dbe4"></div>
<div class="b" style="left:484px;top:858px;width:2391.7px;height:700px;overflow:hidden">
<div class="t" style="left:28.47px;top:29.61px;font-size:25.5px;color:#000;font-weight:700;letter-spacing:-0.839px;">SỐ HĐ</div>
<div class="t" style="left:425.11px;top:29.61px;font-size:25.5px;color:#000;font-weight:700;letter-spacing:0.102px;">THÔNG TIN NGƯỜI MUA</div>
<div class="t" style="left:963.79px;top:29.61px;font-size:25.5px;color:#000;font-weight:700;letter-spacing:-0.979px;">NGÀY TẠO</div>
<div class="t" style="left:1233.69px;top:29.61px;font-size:25.5px;color:#000;font-weight:700;letter-spacing:-0.702px;">NGÀY PHÁT HÀ...</div>
<div class="t" style="left:1504.09px;top:29.61px;font-size:25.5px;color:#000;font-weight:700;letter-spacing:0.329px;">MÃ MẪU</div>
<div class="t" style="left:1774.19px;top:29.61px;font-size:25.5px;color:#000;font-weight:700;letter-spacing:-0.629px;">KÝ HIỆU</div>
<div class="t" style="left:2044.71px;top:29.61px;font-size:25.5px;color:#000;font-weight:700;letter-spacing:-0.879px;">TIỀN TỆ</div>
<div class="t" style="left:2313.99px;top:29.61px;font-size:25.5px;color:#000;font-weight:700;letter-spacing:-0.334px;">LOẠI</div>
<div class="t" style="left:2380.19px;top:29.61px;font-size:25.5px;color:#000;font-weight:700;letter-spacing:-3.328px;">HÓA ĐƠN</div>
</div>
<div class="t" style="left:513.2px;top:986.71px;font-size:23.5px;color:#000;font-weight:400;">—</div>
<div class="t" style="left:908.35px;top:986.01px;font-size:25.5px;color:#334155;font-weight:700;letter-spacing:-0.406px;">Ggg - Dsf</div>
<div class="t" style="left:1448.48px;top:985.59px;font-size:26px;color:#000;font-weight:400;letter-spacing:0.425px;">03/03/2026</div>
<div class="t" style="left:1718.38px;top:985.59px;font-size:26px;color:#000;font-weight:400;letter-spacing:0.414px;">03/03/2026</div>
<div class="t" style="left:1988.56px;top:986.01px;font-size:25.5px;color:#000;font-weight:400;letter-spacing:0.143px;">1/001</div>
<div class="t" style="left:2258.55px;top:986.01px;font-size:25.5px;color:#000;font-weight:400;letter-spacing:-0.386px;">AA/24E</div>
<div class="t" style="left:2528.39px;top:986.01px;font-size:25.5px;color:#000;font-weight:400;letter-spacing:-0.404px;">VND</div>
<div class="b" style="left:2797.8px;top:977.0px;width:48.2px;height:43px;overflow:hidden"><div class="b" style="left:0px;top:0px;width:160px;height:43px;background:#e9f7ea;border-radius:8px"></div><div class="t" style="left:15.2px;top:9.88px;font-size:22px;color:#4cb74f;font-weight:400;">Tiêu Chuẩn</div></div>
<div class="t" style="left:511.73px;top:1098.54px;font-size:25px;color:#000;font-weight:400;letter-spacing:-0.581px;">C26TYY190</div>
<div class="t" style="left:908.36px;top:1098.11px;font-size:25.5px;color:#334155;font-weight:700;letter-spacing:1.344px;">A***-Vn2</div>
<div class="t" style="left:1448.48px;top:1097.69px;font-size:26px;color:#000;font-weight:400;letter-spacing:0.425px;">02/03/2026</div>
<div class="t" style="left:1718.38px;top:1097.69px;font-size:26px;color:#000;font-weight:400;letter-spacing:0.414px;">02/03/2026</div>
<div class="t" style="left:1988.32px;top:1098.11px;font-size:25.5px;color:#000;font-weight:400;letter-spacing:0.203px;">2/001</div>
<div class="t" style="left:2257.31px;top:1098.11px;font-size:25.5px;color:#000;font-weight:400;letter-spacing:-1.484px;">C22TYY</div>
<div class="t" style="left:2528.39px;top:1098.11px;font-size:25.5px;color:#000;font-weight:400;letter-spacing:-0.404px;">VND</div>
<div class="b" style="left:2797.8px;top:1089.1px;width:48.2px;height:43px;overflow:hidden"><div class="b" style="left:0px;top:0px;width:160px;height:43px;background:#e9f7ea;border-radius:8px"></div><div class="t" style="left:15.2px;top:9.88px;font-size:22px;color:#4cb74f;font-weight:400;">Tiêu Chuẩn</div></div>
<div class="t" style="left:580.33px;top:1205.04px;font-size:25px;color:#000;font-weight:400;letter-spacing:-0.701px;-webkit-text-stroke:0.55px #000;">C26TYY191</div>
<div class="t" style="left:581.45px;top:1240.00px;font-size:21.5px;color:#6b7489;font-weight:400;letter-spacing:0.014px;">Điều Chỉnh Của #C26TYY190</div>
<svg class="b" style="left:543px;top:1220.5px;" width="23" height="16" viewBox="0 0 23 16" fill="none"><path d="M2 1.5v9h17M14.5 5.5l5 5-5 5" stroke="#a9afc1" stroke-width="2" stroke-linecap="round" stroke-linejoin="round"/></svg>
<div class="t" style="left:908.36px;top:1218.41px;font-size:25.5px;color:#334155;font-weight:700;letter-spacing:1.344px;">A***-Vn2</div>
<div class="t" style="left:1448.48px;top:1217.99px;font-size:26px;color:#000;font-weight:400;letter-spacing:0.425px;">02/03/2026</div>
<div class="t" style="left:1718.38px;top:1217.99px;font-size:26px;color:#000;font-weight:400;letter-spacing:0.414px;">02/03/2026</div>
<div class="t" style="left:1988.32px;top:1218.41px;font-size:25.5px;color:#000;font-weight:400;letter-spacing:0.203px;">2/001</div>
<div class="t" style="left:2257.31px;top:1218.41px;font-size:25.5px;color:#000;font-weight:400;letter-spacing:-1.484px;">C22TYY</div>
<div class="t" style="left:2528.39px;top:1218.41px;font-size:25.5px;color:#000;font-weight:400;letter-spacing:-0.404px;">VND</div>
<div class="b" style="left:2797.8px;top:1209.4px;width:48.2px;height:43px;overflow:hidden"><div class="b" style="left:0px;top:0px;width:160px;height:43px;background:#fdeee8;border-radius:8px"></div><div class="t" style="left:15.2px;top:9.88px;font-size:22px;color:#e8663d;font-weight:400;">Điều Chỉnh</div></div>
<div class="t" style="left:511.73px;top:1338.24px;font-size:25px;color:#000;font-weight:400;letter-spacing:-0.568px;">C26TYY188</div>
<div class="t" style="left:908.36px;top:1337.81px;font-size:25.5px;color:#334155;font-weight:700;letter-spacing:1.344px;">A***-Vn2</div>
<div class="t" style="left:1448.48px;top:1337.39px;font-size:26px;color:#000;font-weight:400;letter-spacing:0.425px;">02/03/2026</div>
<div class="t" style="left:1718.38px;top:1337.39px;font-size:26px;color:#000;font-weight:400;letter-spacing:0.414px;">02/03/2026</div>
<div class="t" style="left:1988.32px;top:1337.81px;font-size:25.5px;color:#000;font-weight:400;letter-spacing:0.203px;">2/001</div>
<div class="t" style="left:2257.31px;top:1337.81px;font-size:25.5px;color:#000;font-weight:400;letter-spacing:-1.484px;">C22TYY</div>
<div class="t" style="left:2528.39px;top:1337.81px;font-size:25.5px;color:#000;font-weight:400;letter-spacing:-0.404px;">VND</div>
<div class="b" style="left:2797.8px;top:1328.8px;width:48.2px;height:43px;overflow:hidden"><div class="b" style="left:0px;top:0px;width:160px;height:43px;background:#e9f7ea;border-radius:8px"></div><div class="t" style="left:15.2px;top:9.88px;font-size:22px;color:#4cb74f;font-weight:400;">Tiêu Chuẩn</div></div>
<div class="t" style="left:580.33px;top:1444.04px;font-size:25px;color:#000;font-weight:400;letter-spacing:-0.705px;-webkit-text-stroke:0.55px #000;">C26TYY189</div>
<div class="t" style="left:581.45px;top:1479.00px;font-size:21.5px;color:#6b7489;font-weight:400;letter-spacing:0.018px;">Điều Chỉnh Của #C26TYY188</div>
<svg class="b" style="left:543px;top:1459.5px;" width="23" height="16" viewBox="0 0 23 16" fill="none"><path d="M2 1.5v9h17M14.5 5.5l5 5-5 5" stroke="#a9afc1" stroke-width="2" stroke-linecap="round" stroke-linejoin="round"/></svg>
<div class="t" style="left:908.36px;top:1457.41px;font-size:25.5px;color:#334155;font-weight:700;letter-spacing:1.344px;">A***-Vn2</div>
<div class="t" style="left:1448.48px;top:1456.99px;font-size:26px;color:#000;font-weight:400;letter-spacing:0.425px;">02/03/2026</div>
<div class="t" style="left:1718.38px;top:1456.99px;font-size:26px;color:#000;font-weight:400;letter-spacing:0.414px;">02/03/2026</div>
<div class="t" style="left:1988.32px;top:1457.41px;font-size:25.5px;color:#000;font-weight:400;letter-spacing:0.203px;">2/001</div>
<div class="t" style="left:2257.31px;top:1457.41px;font-size:25.5px;color:#000;font-weight:400;letter-spacing:-1.484px;">C22TYY</div>
<div class="t" style="left:2528.39px;top:1457.41px;font-size:25.5px;color:#000;font-weight:400;letter-spacing:-0.404px;">VND</div>
<div class="b" style="left:2797.8px;top:1448.4px;width:48.2px;height:43px;overflow:hidden"><div class="b" style="left:0px;top:0px;width:160px;height:43px;background:#fdeee8;border-radius:8px"></div><div class="t" style="left:15.2px;top:9.88px;font-size:22px;color:#e8663d;font-weight:400;">Điều Chỉnh</div></div>
<div class="b" style="left:2845.9px;top:943.3px;width:30.1px;height:616px;background:linear-gradient(90deg,#f3f3f3,#e9e9e9);border-left:1.5px solid #dedede;box-sizing:border-box"></div>
<div class="b" style="left:2854.3px;top:948.7px;width:15.5px;height:214.5px;background:#b1b1b1;border-radius:8px"></div>
<div class="b" style="left:484px;top:1531px;width:2362.5px;height:28.5px;background:#f0f0f0;border-top:1.5px solid #e2e2e2;box-sizing:border-box"></div>
<div class="b" style="left:490.5px;top:1539.3px;width:1161.5px;height:15.4px;background:#b1b1b1;border-radius:8px"></div>
<div class="b" style="left:484px;top:1558.8px;width:2392px;height:1.6px;background:#e1e1e4"></div>
<div class="b" style="left:2862px;top:859.2px;width:14px;height:82.5px;background:linear-gradient(90deg,rgba(0,0,0,0),rgba(0,0,0,0.045))"></div>
<div class="b" style="left:2874px;top:943.3px;width:2px;height:616px;background:#dcdcdc"></div>
<div class="b" style="left:484.3px;top:1590.2px;width:264.3px;height:71.5px;background:#fff;border:1.4px solid #dedfe2;border-radius:9px;box-sizing:border-box"></div>
<div class="t" style="left:510.39px;top:1614.19px;font-size:26px;color:#000;font-weight:400;letter-spacing:0.492px;">20 Hàng/Trang</div>
<svg class="b" style="left:701.5px;top:1619px;" width="19" height="14" viewBox="0 0 19 14" fill="none"><path d="M1 1l8.5 11.5L18 1" stroke="#bfbfbf" stroke-width="1.8" stroke-linecap="round" stroke-linejoin="round"/></svg>
<svg class="b" style="left:1610px;top:1615px;" width="15" height="24" viewBox="0 0 15 24" fill="none"><path d="M13 1.5L2.5 12 13 22.5" stroke="#1f2937" stroke-width="2.2" stroke-linecap="round" stroke-linejoin="round"/></svg>
<div class="t" style="left:1663.82px;top:1613.99px;font-size:26px;color:#374151;font-weight:400;letter-spacing:0.389px;">1 / 1</div>
<svg class="b" style="left:1758px;top:1615px;" width="15" height="24" viewBox="0 0 15 24" fill="none"><path d="M2 1.5L12.5 12 2 22.5" stroke="#1f2937" stroke-width="2.2" stroke-linecap="round" stroke-linejoin="round"/></svg>
<div class="t" style="left:2632.82px;top:1613.99px;font-size:26px;color:#374151;font-weight:400;letter-spacing:-0.418px;">Đi Tới</div>
<div class="b" style="left:2715px;top:1597px;width:79px;height:58px;background:#fff;border:1.4px solid #e2e4ea;border-radius:10px;box-sizing:border-box"></div>
<div class="t" style="left:2747.02px;top:1613.99px;font-size:26px;color:#9ca3be;font-weight:400;letter-spacing:-1.21px;">1</div>
<div class="t" style="left:2807.42px;top:1613.99px;font-size:26px;color:#374151;font-weight:400;letter-spacing:0.651px;">Trang</div>
<div class="b" style="left:2797.1px;top:1410.1px;width:79px;height:79.4px;background:#2559dc;border-radius:50%;box-shadow:0 6px 18px rgba(0,0,0,0.2)"></div>
<svg class="b" style="left:2818px;top:1428px;" width="36" height="42" viewBox="0 0 36 42" fill="none"><path d="M10.7 31V12.6L18.5 2.2l7.8 10.4V31" stroke="#fff" stroke-width="3.3" stroke-linecap="round" stroke-linejoin="round" /><path d="M10.7 22.2c-3.6 2.3-6.4 5-7.8 8.8H34.1c-1.4-3.8-4.2-6.5-7.8-8.8" stroke="#fff" stroke-width="3.3" stroke-linecap="round" stroke-linejoin="round" /><path d="M10.7 32.6c0 4.6 3.6 7.8 7.8 7.8s7.8-3.2 7.8-7.8" stroke="#fff" stroke-width="3.3" stroke-linecap="round" stroke-linejoin="round" /><circle cx="18.5" cy="16.4" r="2.5" fill="#fff"/></svg>
<div class="b" style="left:0px;top:1682.4px;width:2914px;height:1.6px;background:#fff"></div>
</body></html>
